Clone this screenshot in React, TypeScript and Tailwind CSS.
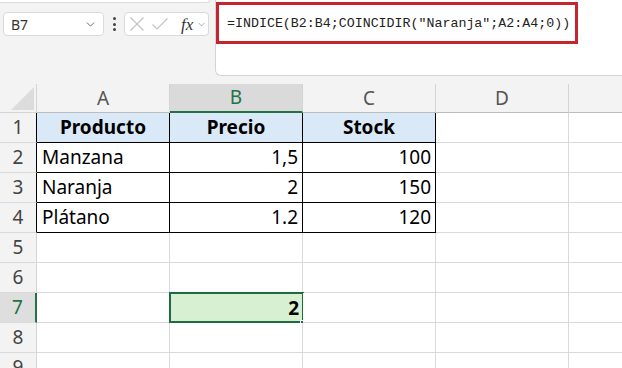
import { ChevronDown } from "lucide-react";

const COLS = ["A", "B", "C", "D", ""];

type Cell = { text: string; align?: "left" | "right" | "center"; bold?: boolean };

const DATA: Record<number, Cell[]> = {
  1: [
    { text: "Producto", align: "center", bold: true },
    { text: "Precio", align: "center", bold: true },
    { text: "Stock", align: "center", bold: true },
  ],
  2: [{ text: "Manzana" }, { text: "1,5", align: "right" }, { text: "100", align: "right" }],
  3: [{ text: "Naranja" }, { text: "2", align: "right" }, { text: "150", align: "right" }],
  4: [{ text: "Plátano" }, { text: "1.2", align: "right" }, { text: "120", align: "right" }],
};

const font = "font-['Noto_Sans','Liberation_Sans',sans-serif]";

const Toolbar = () => (
  <div className="flex h-[84px] bg-[#f3f3f3]">
    <div className="w-[215px] shrink-0">
      <div className="h-[3px] w-[210px] bg-white border-b border-r border-[#dcdcdc] rounded-br-[4px]" />
      <div className="mt-[9px] flex items-center">
        <div className="ml-[3px] w-[101px] h-[24px] bg-white border border-[#d9d9d9] rounded-[4px] flex items-center justify-between pl-[7px] pr-[6px]">
          <span className={`${font} text-[14px] text-[#333]`}>B7</span>
          <ChevronDown size={13} strokeWidth={1.6} className="text-[#555]" />
        </div>
        <div className="ml-[9px] flex flex-col gap-[2.5px]">
          <span className="w-[3px] h-[3px] rounded-full bg-[#444]" />
          <span className="w-[3px] h-[3px] rounded-full bg-[#444]" />
          <span className="w-[3px] h-[3px] rounded-full bg-[#444]" />
        </div>
        <div className="ml-[8px] w-[85px] h-[24px] bg-white border border-[#d9d9d9] rounded-[4px] flex items-center pl-[5px]">
          <svg width="14" height="14" viewBox="0 0 14 14" className="shrink-0">
            <path d="M0.5 0.5 13.5 13.5M13.5 0.5 0.5 13.5" stroke="#c4c4c4" strokeWidth="1.2" fill="none" />
          </svg>
          <svg width="16" height="12" viewBox="0 0 16 12" className="ml-[8px] shrink-0">
            <path d="M0.5 6.5 5 11 15.5 0.5" stroke="#c4c4c4" strokeWidth="1.2" fill="none" />
          </svg>
          <span className="ml-[13px] shrink-0 font-['Liberation_Serif',serif] italic text-[17px] text-[#333] leading-none">fx</span>
          <ChevronDown size={11} strokeWidth={1.5} className="ml-[3px] shrink-0 text-[#888]" />
        </div>
      </div>
    </div>
    <div className="flex-1 h-[76px] bg-white border border-t-0 border-r-0 border-[#d4d4d4] rounded-bl-[6px]">
      <div className="mt-[2px] w-[362px] h-[42px] border-[3px] border-[#c5252f] flex items-center pl-[8px] pt-[2px]">
        <span className="font-['Liberation_Mono',monospace] text-[13.3px] text-[#222]">
          =INDICE(B2:B4;COINCIDIR("Naranja";A2:A4;0))
        </span>
      </div>
    </div>
  </div>
);

const HeaderRow = () => (
  <div className="flex h-[29px] bg-[#f3f3f3]">
    <div className="w-[37px] shrink-0 relative border-r border-b border-[#d4d4d4]">
      <svg width="24" height="24" className="absolute left-[11px] top-[3px]">
        <polygon points="23,0 23,23 0,23" fill="#dcdcdc" />
      </svg>
    </div>
    {COLS.map((c, i) => {
      const sel = c === "B";
      return (
        <div
          key={i}
          className={`w-[133px] shrink-0 flex items-center justify-center border-r border-[#d4d4d4] ${
            sel ? "bg-[#dadada] border-b-2 border-b-[#217346] text-[#217346]" : "border-b border-b-[#bdbdbd] text-[#555]"
          } ${font} text-[19px]`}
        >
          {c}
        </div>
      );
    })}
  </div>
);

const GridRow = ({ r }: { r: number }) => {
  const inTable = r >= 1 && r <= 4;
  const rowSel = r === 7;
  return (
    <div className="flex h-[30px]">
      <div
        className={`w-[37px] shrink-0 flex items-center justify-center border-b border-[#d9d9d9] ${font} text-[19px] ${
          rowSel
            ? "bg-[#dedede] border-r-2 border-r-[#217346] text-[#217346]"
            : `bg-[#f3f3f3] border-r ${inTable ? "border-r-black" : "border-r-[#d4d4d4]"} text-[#444]`
        }`}
      >
        {r}
      </div>
      {COLS.map((c, i) => {
        const cell = inTable && i < 3 ? DATA[r][i] : undefined;
        const tableCell = inTable && i < 3;
        const selected = r === 7 && c === "B";
        const borderR = tableCell ? "border-r-black" : "border-r-[#d9d9d9]";
        const borderB = tableCell ? "border-b-black" : "border-b-[#d9d9d9]";
        const bg = r === 1 && i < 3 ? "bg-[#dae9f8]" : selected ? "bg-[#d8f0d2]" : "bg-white";
        const align =
          cell?.align === "right" ? "justify-end pr-[4px]" : cell?.align === "center" ? "justify-center" : "justify-start pl-[5px]";
        return (
          <div
            key={i}
            className={`w-[133px] shrink-0 relative flex items-center border-r border-b ${borderR} ${borderB} ${bg} ${align} ${font} text-[19px] text-black ${
              cell?.bold ? "font-bold" : ""
            }`}
          >
            {cell?.text}
            {selected && (
              <>
                <div className="absolute -left-[1px] -top-[1px] w-[135px] h-[31px] border-2 border-[#1e6b41]" />
                <span className="absolute right-[-1px] bottom-[0px] flex items-center pr-[4px] font-bold">2</span>
                <div className="absolute -right-[4px] -bottom-[4px] w-[6px] h-[6px] bg-[#1e6b41] border border-white" />
              </>
            )}
          </div>
        );
      })}
    </div>
  );
};

export default function App() {
  return (
    <div className="w-[622px] h-[368px] overflow-hidden bg-white">
      <Toolbar />
      <HeaderRow />
      {[1, 2, 3, 4, 5, 6, 7, 8, 9].map((r) => (
        <GridRow key={r} r={r} />
      ))}
    </div>
  );
}
